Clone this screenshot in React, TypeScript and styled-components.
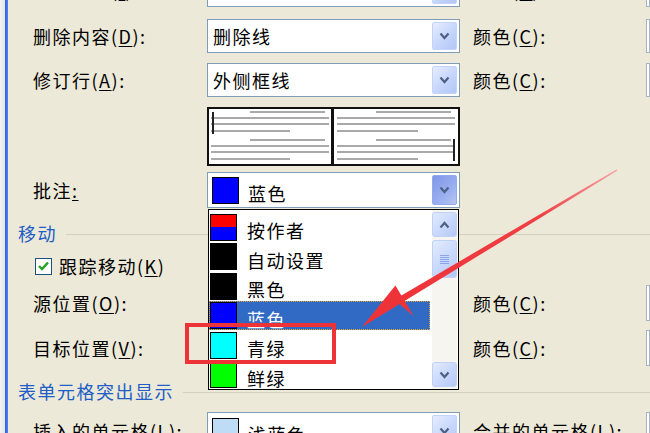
import React from 'react';
import styled, { createGlobalStyle } from 'styled-components';

const GlobalStyle = createGlobalStyle`
	html, body {
		margin: 0;
		padding: 0;
	}
	body {
		width: 650px;
		height: 433px;
		overflow: hidden;
		background: #ece9d8;
		font-family: 'Noto Sans CJK SC', 'Liberation Sans', sans-serif;
		font-size: 18px;
		letter-spacing: 1.5px;
		color: #000;
	}
	* {
		box-sizing: border-box;
	}
`;

type ListEntry = { name: string; color: string; selected?: boolean };

const listEntries: ListEntry[] = [
	{ name: '按作者', color: 'linear-gradient(#ff0000 0 50%, #0000ff 50% 100%)' },
	{ name: '自动设置', color: '#000000' },
	{ name: '黑色', color: '#000000' },
	{ name: '蓝色', color: '#0000ff', selected: true },
	{ name: '青绿', color: '#00ffff' },
	{ name: '鲜绿', color: '#00ff00' },
];

const Chevron: React.FC<{ up?: boolean }> = ({ up }) => (
	<svg width='11' height='8' viewBox='0 0 11 8'>
		<polyline
			points={up ? '1.5,6.5 5.5,2 9.5,6.5' : '1.5,1.5 5.5,6 9.5,1.5'}
			fill='none'
			stroke='#4d6185'
			strokeWidth='2.2'
		/>
	</svg>
);

const Preview: React.FC = () => {
	const lines = (x0: number, indent: number, short: number) => (
		<>
			{[4, 32].map((top) => (
				<g key={top}>
					<rect x={x0 + indent} y={top} width={122 - indent - 4} height='2' fill='#a9a9a9' />
					<rect x={x0 + 4} y={top + 6} width='118' height='2' fill='#a9a9a9' />
					<rect x={x0 + 4} y={top + 12} width='118' height='2' fill='#a9a9a9' />
					<rect x={x0 + 4} y={top + 19} width={short} height='2' fill='#a9a9a9' />
				</g>
			))}
		</>
	);
	return (
		<svg width='253' height='59' viewBox='0 0 253 59'>
			<rect x='0' y='0' width='253' height='59' fill='#fff' />
			{lines(0, 43, 79)}
			{lines(126, 43, 81)}
			<rect x='5' y='5' width='2' height='22' fill='#222' />
			<rect x='246' y='32' width='2' height='22' fill='#222' />
			<rect x='1' y='1' width='124' height='57' fill='none' stroke='#111' strokeWidth='2' />
			<rect x='126' y='1' width='126' height='57' fill='none' stroke='#111' strokeWidth='2' />
		</svg>
	);
};

const App: React.FC = () => {
	return (
		<Page>
			<GlobalStyle />
			<LeftEdge />
			<Dialog>
				<Row $h={34} $mt={0}>
					<Label>
						插入内容(<u>I</u>):
					</Label>
					<Combo>
						<ComboText>单下划线</ComboText>
						<DropButton>
							<Chevron />
						</DropButton>
					</Combo>
					<RightLabel>
						颜色(<u>C</u>):
					</RightLabel>
					<EdgeCombo />
				</Row>
				<Row $h={34} $mt={12}>
					<Label>
						删除内容(<u>D</u>):
					</Label>
					<Combo>
						<ComboText>删除线</ComboText>
						<DropButton>
							<Chevron />
						</DropButton>
					</Combo>
					<RightLabel>
						颜色(<u>C</u>):
					</RightLabel>
					<EdgeCombo />
				</Row>
				<Row $h={34} $mt={10}>
					<Label>
						修订行(<u>A</u>):
					</Label>
					<Combo>
						<ComboText>外侧框线</ComboText>
						<DropButton>
							<Chevron />
						</DropButton>
					</Combo>
					<RightLabel>
						颜色(<u>C</u>):
					</RightLabel>
					<EdgeCombo />
				</Row>
				<Row $h={59} $mt={10}>
					<span />
					<Preview />
				</Row>
				<Row $h={36} $mt={6}>
					<Label>
						批注<u>:</u>
					</Label>
					<Combo $swatch>
						<Swatch $color='#0000ff' />
						<ComboText $low>蓝色</ComboText>
						<DropButton $pressed>
							<Chevron />
						</DropButton>
						<Popup>
							<Items>
								{listEntries.map((entry) => (
									<Item key={entry.name} $selected={entry.selected}>
										<Swatch $color={entry.color} />
										<span>{entry.name}</span>
									</Item>
								))}
							</Items>
							<ScrollBar>
								<ScrollButton>
									<Chevron up />
								</ScrollButton>
								<Thumb>
									<Grip />
								</Thumb>
								<ScrollButton $bottom>
									<Chevron />
								</ScrollButton>
							</ScrollBar>
						</Popup>
					</Combo>
				</Row>
				<SectionHeader $mt={14}>移动</SectionHeader>
				<CheckRow>
					<CheckBox>
						<svg width='11' height='10' viewBox='0 0 11 10'>
							<polyline
								points='1,5 4,8 10,1.5'
								fill='none'
								stroke='#21a121'
								strokeWidth='2.4'
							/>
						</svg>
					</CheckBox>
					<span>
						跟踪移动(<u>K</u>)
					</span>
				</CheckRow>
				<Row $h={36} $mt={8}>
					<Label>
						源位置(<u>O</u>):
					</Label>
					<span />
					<RightLabel>
						颜色(<u>C</u>):
					</RightLabel>
					<EdgeCombo />
				</Row>
				<Row $h={36} $mt={9}>
					<Label>
						目标位置(<u>V</u>):
					</Label>
					<span />
					<RightLabel>
						颜色(<u>C</u>):
					</RightLabel>
					<EdgeCombo />
				</Row>
				<SectionHeader $mt={14}>表单元格突出显示</SectionHeader>
				<Row $h={38} $mt={10}>
					<Label>
						插入的单元格(<u>L</u>):
					</Label>
					<Combo $swatch>
						<Swatch $color='#bfdcf7' />
						<ComboText $low>浅蓝色</ComboText>
						<DropButton>
							<Chevron />
						</DropButton>
					</Combo>
					<RightLabel>
						合并的单元格(<u>L</u>):
					</RightLabel>
					<EdgeCombo />
				</Row>
			</Dialog>
			<RedBox />
			<Arrow viewBox='0 0 650 433'>
				<defs>
					<linearGradient id='tail' x1='617' y1='170' x2='400' y2='303' gradientUnits='userSpaceOnUse'>
						<stop offset='0' stopColor='#f6a3a5' />
						<stop offset='0.35' stopColor='#ef3f45' />
						<stop offset='1' stopColor='#ee3338' />
					</linearGradient>
				</defs>
				<polygon
					points='617.5,170.6 616.5,169.4 396.3,298.4 400.3,304.8 413.6,316.1 395.4,285.6 362,327'
					fill='url(#tail)'
				/>
			</Arrow>
		</Page>
	);
};

export default App;

const Page = styled.div`
	position: relative;
	display: flex;
	width: 650px;
	height: 433px;
	overflow: hidden;
	background: #ece9d8;
`;

const LeftEdge = styled.div`
	width: 8px;
	flex-shrink: 0;
	background: linear-gradient(
		to right,
		#f2f2f0 0,
		#e4e4e4 5px,
		#2d5fd9 5px,
		#4f82f2 8px
	);
`;

const Dialog = styled.div`
	flex: 1;
	display: flex;
	flex-direction: column;
	margin-top: -27px;
	padding-left: 10px;
`;

const Row = styled.div<{ $h: number; $mt: number }>`
	display: grid;
	grid-template-columns: 174px 253px 186px 1fr;
	align-items: center;
	height: ${({ $h }) => $h}px;
	margin-top: ${({ $mt }) => $mt}px;
	padding-left: 15px;
	flex-shrink: 0;
	white-space: nowrap;

	& > svg {
		display: block;
	}
`;

const Label = styled.span`
	u {
		text-decoration-thickness: 1px;
		text-underline-offset: 2px;
	}
`;

const RightLabel = styled(Label)`
	padding-left: 13px;
`;

const Combo = styled.div<{ $swatch?: boolean }>`
	position: relative;
	height: 100%;
	display: flex;
	align-items: center;
	padding-left: ${({ $swatch }) => ($swatch ? 4 : 5)}px;
	background: #fff;
	border: 1px solid #7f9db9;
`;

const EdgeCombo = styled.div`
	height: 100%;
	background: #fff;
	border: 1px solid #a5b3c4;
`;

const ComboText = styled.span<{ $low?: boolean }>`
	flex: 1;
	padding-left: ${({ $low }) => ($low ? 9 : 0)}px;
	padding-top: ${({ $low }) => ($low ? 6 : 0)}px;
`;

const DropButton = styled.div<{ $pressed?: boolean }>`
	align-self: stretch;
	width: 25px;
	margin: 2px;
	display: flex;
	align-items: center;
	justify-content: center;
	border-radius: 2px;
	border: 1px solid ${({ $pressed }) => ($pressed ? '#93a9ee' : '#c3d3fb')};
	background: ${({ $pressed }) =>
		$pressed
			? 'linear-gradient(135deg, #7e96e8 0%, #9aaff0 60%, #b6c5f4 100%)'
			: 'linear-gradient(135deg, #e6edfe 0%, #c6d6fb 55%, #b1c6f7 100%)'};
`;

const Swatch = styled.div<{ $color: string }>`
	width: 27px;
	height: 27px;
	flex-shrink: 0;
	border: 1px solid #000;
	background: ${({ $color }) => $color};
`;

const Popup = styled.div`
	position: absolute;
	left: 0;
	top: 36px;
	width: 251px;
	height: 181px;
	z-index: 5;
	display: flex;
	background: #fff;
	border: 1px solid #000;
`;

const Items = styled.div`
	flex: 1;
	display: flex;
	flex-direction: column;
	padding-top: 2px;
	overflow: hidden;
`;

const Item = styled.div<{ $selected?: boolean }>`
	height: 29.5px;
	flex-shrink: 0;
	display: flex;
	align-items: center;
	gap: 10px;
	padding-left: 1px;
	padding-top: 1px;
	background: ${({ $selected }) => ($selected ? '#316ac5' : 'transparent')};
	color: ${({ $selected }) => ($selected ? '#fff' : '#000')};
	outline: ${({ $selected }) => ($selected ? '1px dotted #e3a72f' : 'none')};
	outline-offset: -1px;

	span {
		padding-top: 6px;
	}
`;

const ScrollBar = styled.div`
	width: 25px;
	margin: 0 1px 0 2px;
	display: flex;
	flex-direction: column;
	padding: 2px 0;
	background: #f6f5f0;
`;

const ScrollButton = styled.div<{ $bottom?: boolean }>`
	height: 25px;
	margin-top: ${({ $bottom }) => ($bottom ? 'auto' : '0')};
	display: flex;
	align-items: center;
	justify-content: center;
	border-radius: 3px;
	border: 1px solid #c0d0f6;
	background: linear-gradient(135deg, #e3ebfd 0%, #c8d7fb 55%, #b4c8f7 100%);
`;

const Thumb = styled(ScrollButton)`
	height: 38px;
	margin-top: 3px;
`;

const Grip = styled.div`
	width: 9px;
	height: 9px;
	background: repeating-linear-gradient(
		to bottom,
		#8ca5e6 0 1px,
		transparent 1px 2px
	);
`;

const SectionHeader = styled.div<{ $mt: number }>`
	display: flex;
	align-items: center;
	gap: 9px;
	height: 22px;
	margin-top: ${({ $mt }) => $mt}px;
	flex-shrink: 0;
	color: #215dc6;
	white-space: nowrap;

	&::after {
		content: '';
		flex: 1;
		height: 1px;
		margin-top: 2px;
		background: #d3d0bf;
	}
`;

const CheckRow = styled.div`
	display: flex;
	align-items: center;
	gap: 7px;
	height: 22px;
	margin-top: 11px;
	padding-left: 17px;
	flex-shrink: 0;

	u {
		text-decoration-thickness: 1px;
		text-underline-offset: 2px;
	}
`;

const CheckBox = styled.div`
	width: 17px;
	height: 17px;
	display: flex;
	align-items: center;
	justify-content: center;
	background: #fff;
	border: 1px solid #1c5180;
`;

const RedBox = styled.div`
	position: absolute;
	left: 185px;
	top: 323px;
	width: 151px;
	height: 41px;
	z-index: 10;
	border: 4px solid #ee3338;
`;

const Arrow = styled.svg`
	position: absolute;
	left: 0;
	top: 0;
	width: 650px;
	height: 433px;
	z-index: 11;
	pointer-events: none;
`;
